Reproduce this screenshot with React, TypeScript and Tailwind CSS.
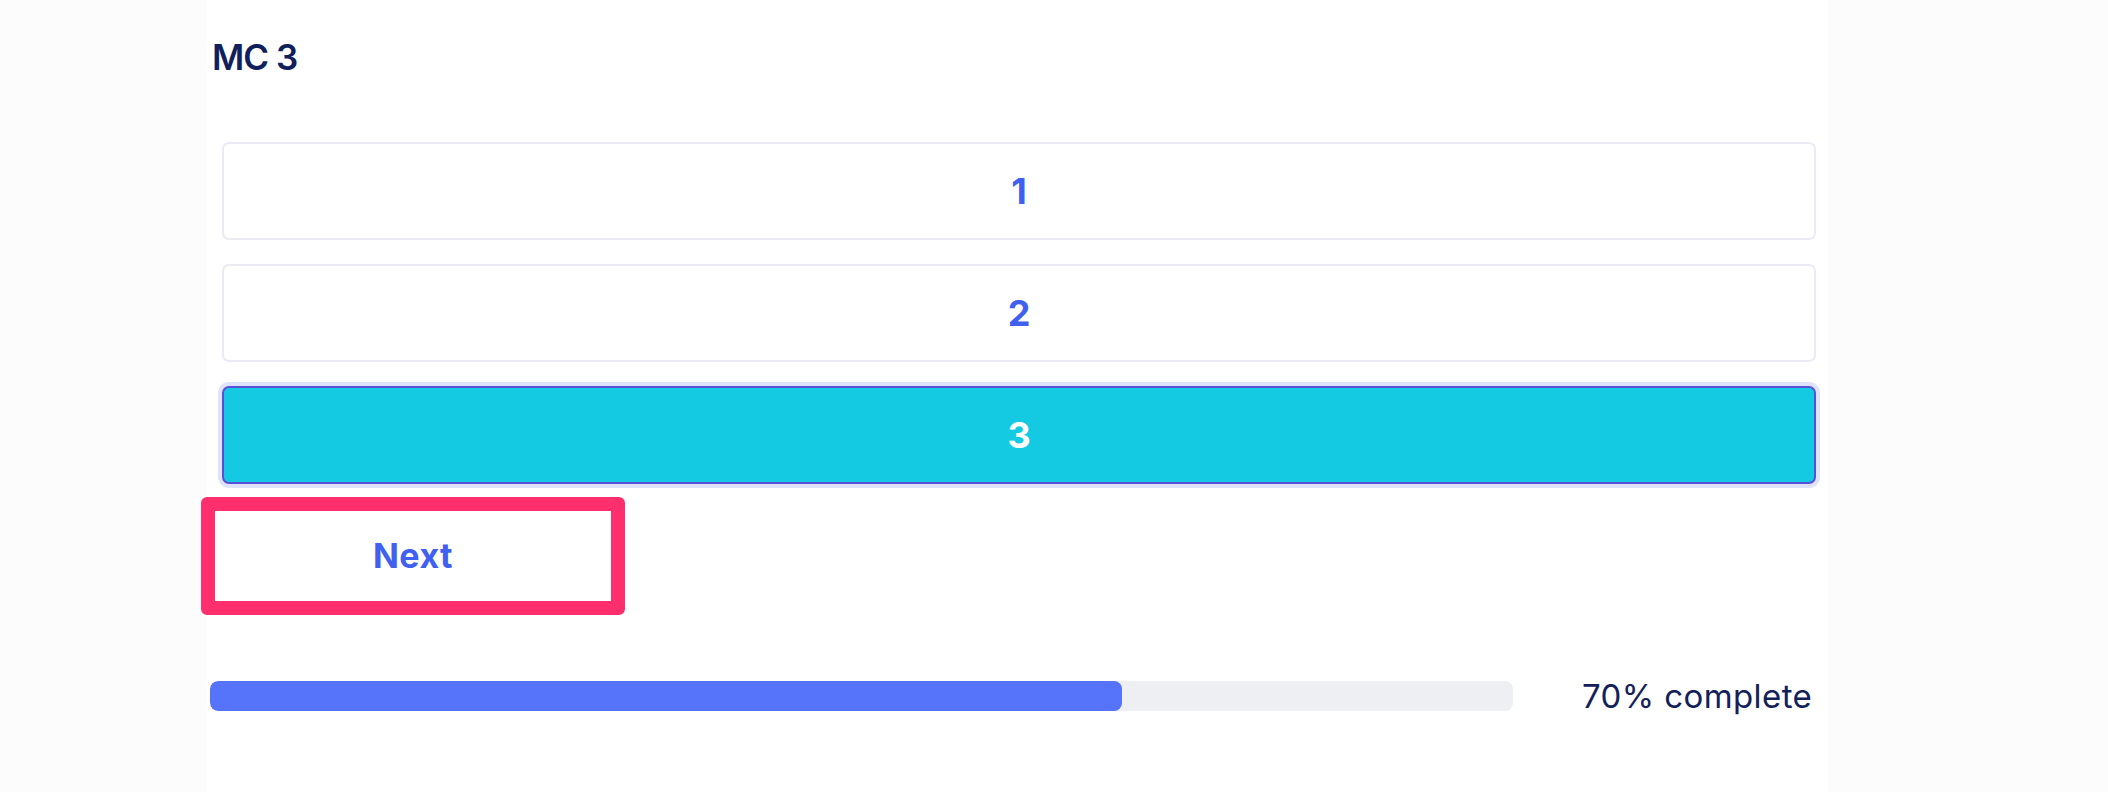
import React from 'react';

const options = ['1', '2', '3'];

export default function App() {
  const selected = '3';
  const progress = 70;

  return (
    <div className="min-h-[792px] w-full bg-[#fcfcfc] flex font-['Inter',sans-serif]">
      <div className="ml-[207px] w-[1621px] min-h-[792px] bg-white flex flex-col">
        {/* Question title */}
        <h1 className="mt-[40px] ml-[5px] h-[36px] text-[35px] leading-none font-semibold tracking-[-1px] text-[#111f5c]">
          MC 3
        </h1>

        {/* Answer options */}
        <div className="mt-[66px] ml-[15px] w-[1594px] flex flex-col gap-[24px]">
          {options.map((opt) => {
            const isSelected = opt === selected;
            return (
              <button
                key={opt}
                className={
                  isSelected
                    ? 'h-[98px] w-full flex items-center justify-center rounded-[7px] border-2 border-[#5a50d8] bg-[#14cae3] ring-4 ring-[#dfe2fb] text-white text-[36px] leading-none font-bold'
                    : 'h-[98px] w-full flex items-center justify-center rounded-[7px] border-2 border-[#ebeaf5] bg-white text-[#4060f0] text-[36px] leading-none font-bold'
                }
              >
                {opt}
              </button>
            );
          })}
        </div>

        {/* Next */}
        <button className="mt-[13px] ml-[-6px] w-[424px] h-[118px] flex items-center justify-center rounded-[6px] border-[14px] border-[#ff2e6c] bg-white text-[#4060f0] text-[34px] leading-none font-bold tracking-[0.5px]">
          Next
        </button>

        {/* Progress */}
        <div className="mt-[66px] ml-[3px] flex items-center">
          <div className="w-[1303px] h-[30px] rounded-[8px] bg-[#eeeff3] overflow-hidden">
            <div className="h-full rounded-[8px] bg-[#5574fa]" style={{ width: `${progress}%` }} />
          </div>
          <span className="ml-[69px] text-[33px] leading-[30px] tracking-[0.4px] text-[#13205a]">{progress}% complete</span>
        </div>
      </div>
    </div>
  );
}
